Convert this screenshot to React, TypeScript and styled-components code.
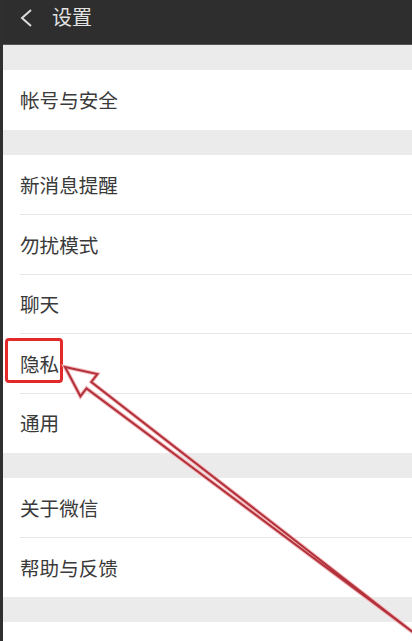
import React from "react";
import styled, { createGlobalStyle } from "styled-components";

const Global = createGlobalStyle`
  html, body { margin: 0; padding: 0; background: #ffffff; }
  body { font-family: "Noto Sans CJK SC", "Noto Sans", sans-serif; overflow: hidden; }
`;

const Screen = styled.div`
  position: relative;
  width: 412px;
  height: 641px;
  display: flex;
  overflow: hidden;
  background: #ffffff;
`;

const EdgeStrip = styled.div`
  width: 3px;
  flex: none;
  background: #2f2f2f;
`;

const Main = styled.div`
  flex: 1;
  display: flex;
  flex-direction: column;
`;

const Header = styled.header`
  height: 44px;
  flex: none;
  background: #2e2e2e;
  border-bottom: 1px solid #555;
  display: flex;
  align-items: center;
  gap: 19px;
  padding-left: 16px;
  box-sizing: content-box;
`;

const Title = styled.h1`
  margin: 0;
  font-size: 20px;
  font-weight: 400;
  color: #e2e2e2;
  line-height: 1;
  margin-top: -10px;
`;

const BackIcon = styled.svg`
  margin-top: -8px;
  flex: none;
`;

const Gap = styled.div`
  height: 25px;
  flex: none;
  background: #ebebeb;
`;

const Group = styled.div`
  background: #ffffff;
  display: flex;
  flex-direction: column;
`;

const Row = styled.div<{ $first?: boolean }>`
  height: 59.6px;
  box-sizing: border-box;
  margin-left: 17px;
  display: flex;
  align-items: center;
  border-top: ${(p) => (p.$first ? "none" : "1px solid #e6e6e6")};
  font-size: 19.6px;
  color: #3a3a3a;
`;

const Label = styled.span`
  position: relative;
  line-height: 1;
`;

const Marker = styled.span`
  position: absolute;
  left: -15px;
  top: -16px;
  width: 52px;
  height: 39px;
  border: 3px solid #e22a2a;
  border-radius: 4px;
`;

const Filler = styled.div`
  flex: 1;
  background: #ffffff;
`;

const ArrowLayer = styled.svg`
  position: absolute;
  left: 0;
  top: 0;
  pointer-events: none;
`;

const groups: string[][] = [
  ["帐号与安全"],
  ["新消息提醒", "勿扰模式", "聊天", "隐私", "通用"],
  ["关于微信", "帮助与反馈"],
];

export default function App() {
  return (
    <>
      <Global />
      <Screen>
        <EdgeStrip />
        <Main>
          <Header>
            <BackIcon width="14" height="18" viewBox="0 0 14 18">
              <path d="M12 1 L3 9 L12 17" fill="none" stroke="#dcdcdc" strokeWidth="2" />
            </BackIcon>
            <Title>设置</Title>
          </Header>
          {groups.map((g, gi) => (
            <React.Fragment key={gi}>
              <Gap />
              <Group>
                {g.map((item, i) => (
                  <Row key={item} $first={i === 0}>
                    <Label>
                      {item === "隐私" && <Marker />}
                      {item}
                    </Label>
                  </Row>
                ))}
              </Group>
            </React.Fragment>
          ))}
          <Gap />
          <Filler />
        </Main>
        <ArrowLayer width="412" height="641" viewBox="0 0 412 641">
          <polygon
            points="65,367 97.4,374.1 91.3,382 414,633 86.5,388.4 80.4,396.3"
            fill="none"
            stroke="#f2b8bc"
            strokeWidth="4"
            strokeLinejoin="miter"
          />
          <polygon
            points="65,367 97.4,374.1 91.3,382 414,633 86.5,388.4 80.4,396.3"
            fill="none"
            stroke="#b3313a"
            strokeWidth="2"
            strokeLinejoin="miter"
          />
        </ArrowLayer>
      </Screen>
    </>
  );
}
